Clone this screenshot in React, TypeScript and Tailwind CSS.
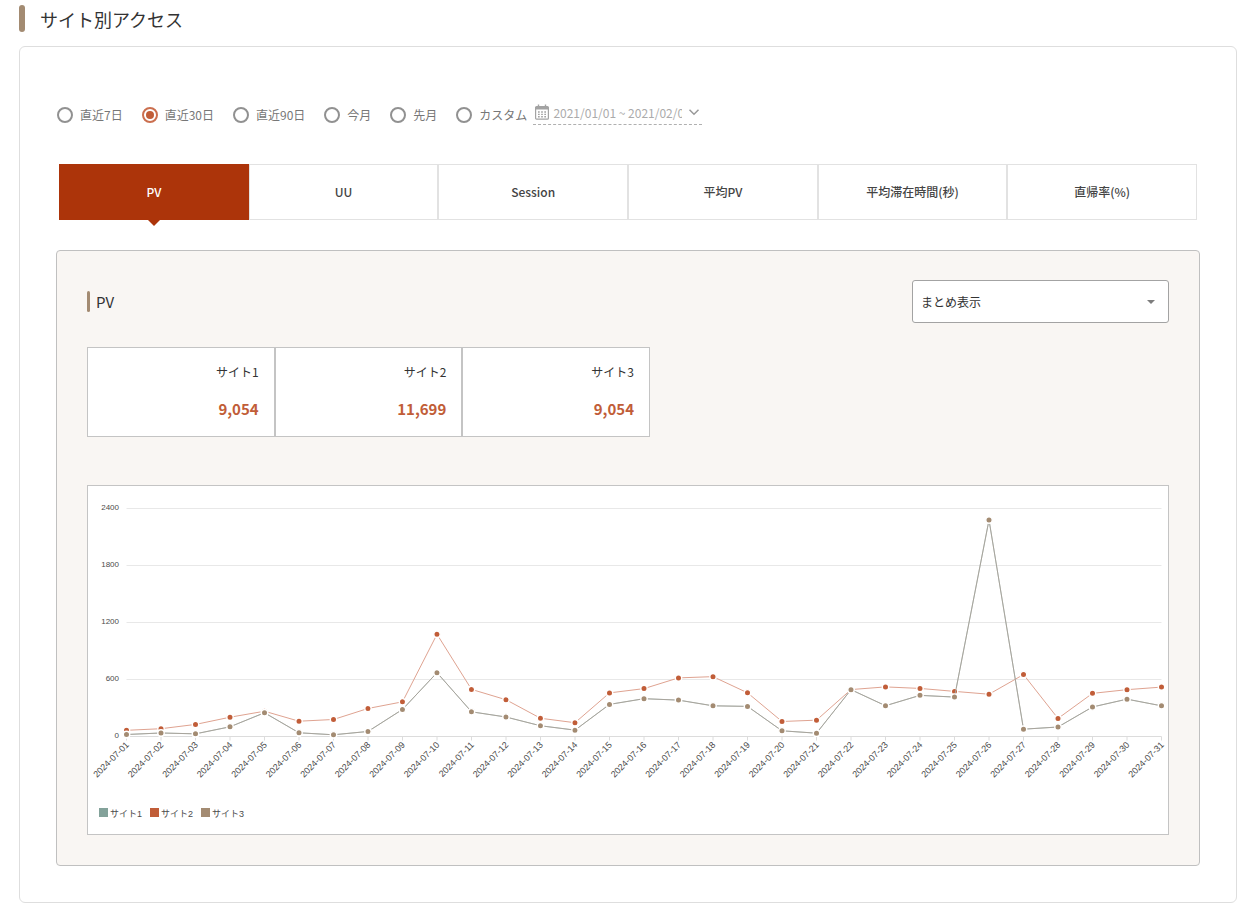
import { useState } from "react";

type Site = {
  name: string;
  total: number;
  line: string;
  dot: string;
  values: number[];
};

const site1Values = [
  21, 37, 28, 102, 250, 39, 18, 53, 285, 672, 260, 205, 113, 67, 338, 398, 383,
  323, 317, 60, 35, 493, 324, 433, 415, 2279, 77, 100, 311, 393, 323,
];

const site2Values = [
  65, 82, 127, 203, 266, 161, 179, 295, 365, 1076, 496, 387, 192, 145, 459, 504,
  617, 630, 460, 158, 172, 494, 522, 506, 475, 445, 652, 190, 454, 493, 520,
];

const sites: Site[] = [
  { name: "サイト1", total: 9054, line: "#c3cfcb", dot: "#83a29a", values: site1Values },
  { name: "サイト2", total: 11699, line: "#dfa391", dot: "#c15d38", values: site2Values },
  { name: "サイト3", total: 9054, line: "#a8a49c", dot: "#a38b72", values: site1Values },
];

const periods = ["直近7日", "直近30日", "直近90日", "今月", "先月", "カスタム"];

const tabs = ["PV", "UU", "Session", "平均PV", "平均滞在時間(秒)", "直帰率(%)"];

const ticks = [0, 600, 1200, 1800, 2400];

const LEFT = 38.5;
const RIGHT = 1073.5;
const TOP = 22.5;
const BOTTOM = 250.5;

const xAt = (i: number) => LEFT + (i * (RIGHT - LEFT)) / 30;
const yAt = (v: number) => BOTTOM - (v * (BOTTOM - TOP)) / 2400;

function CalendarIcon() {
  return (
    <svg width="14" height="16" viewBox="0 0 14 16" className="shrink-0" fill="none" stroke="#a3a3a3">
      <rect x="0.6" y="2.6" width="12.8" height="12.6" rx="1" strokeWidth="1.2" />
      <path d="M0.6 4.2H13.4" strokeWidth="2.6" />
      <path d="M3.5 0.4V3M10.5 0.4V3" strokeWidth="1.4" />
      <path d="M3 8H11M3 10.4H11M3 12.8H11" strokeWidth="1.4" strokeDasharray="1.7 1.45" />
    </svg>
  );
}

function LineChart() {
  return (
    <svg viewBox="0 0 1080 348" className="block w-full" role="img" aria-label="PV">
      {ticks.map((tick) => (
        <g key={tick}>
          <line x1={LEFT} x2={RIGHT} y1={yAt(tick)} y2={yAt(tick)} stroke={tick === 0 ? "#dcdcdc" : "#e8e8e8"} />
          <text x="31" y={yAt(tick) + 1} textAnchor="end" fontSize="8" fill="#4b4b4b">
            {tick}
          </text>
        </g>
      ))}

      {/* Dates */}
      {site1Values.map((_, i) => (
        <g key={i}>
          <line x1={xAt(i)} x2={xAt(i)} y1={BOTTOM} y2={BOTTOM + 4} stroke="#dcdcdc" />
          <text
            transform={`translate(${xAt(i) + 3} ${BOTTOM + 9}) rotate(-45)`}
            textAnchor="end"
            fontSize="9"
            fill="#4b4b4b"
          >
            {`2024-07-${String(i + 1).padStart(2, "0")}`}
          </text>
        </g>
      ))}

      {/* Series */}
      {sites.map((site) => (
        <g key={site.name}>
          <polyline
            points={site.values.map((v, i) => `${xAt(i)},${yAt(v)}`).join(" ")}
            fill="none"
            stroke={site.line}
          />
          {site.values.map((v, i) => (
            <circle key={i} cx={xAt(i)} cy={yAt(v)} r="3.2" fill={site.dot} stroke="#fff" strokeWidth="1.4" />
          ))}
        </g>
      ))}

      {/* Legend */}
      {sites.map((site, i) => (
        <g key={site.name}>
          <rect x={11 + i * 51} y="322" width="9" height="9" fill={site.dot} />
          <text x={22 + i * 51} y="331" fontSize="9" fill="#4b4b4b">
            {site.name}
          </text>
        </g>
      ))}
    </svg>
  );
}

export default function App() {
  const [period, setPeriod] = useState("直近30日");
  const [active, setActive] = useState("PV");

  return (
    <main className="bg-white pt-[5px] pr-4 pb-[6px] pl-[19px] font-['Noto_Sans_CJK_JP',sans-serif] text-xs text-[#333]">
      <div className="flex items-center gap-[15px]">
        <span className="h-[27px] w-[6px] rounded-full bg-[#a38b72]" />
        <h1 className="pt-px text-lg leading-[26px]">サイト別アクセス</h1>
      </div>

      <section className="mt-[14px] rounded-md border border-[#dedede] px-9 pt-14 pb-9">
        {/* Period */}
        <div className="flex items-end pl-px">
          <fieldset className="flex gap-[19px]">
            {periods.map((item) => (
              <label key={item} className="flex h-5 items-center gap-[7px] text-[#777]">
                <input
                  type="radio"
                  name="period"
                  checked={period === item}
                  onChange={() => setPeriod(item)}
                  className="grid size-4 appearance-none place-items-center rounded-full border-2 border-[#919191] checked:border-[#cb6f4f] checked:before:size-2 checked:before:rounded-full checked:before:bg-[#c15d38]"
                />
                {item}
              </label>
            ))}
          </fieldset>
          <div className="ml-[6px] flex h-[22px] w-[169px] items-center border-b border-dashed border-[#b0b0b0] pr-[2px] pb-[3px] pl-[2px]">
            <CalendarIcon />
            <input
              type="text"
              readOnly
              aria-label="期間"
              value="2021/01/01 ~ 2021/02/01"
              className="ml-1 h-[18px] w-[129px] min-w-0 text-[#ababab] outline-none"
            />
            <svg width="12" height="8" viewBox="0 0 12 8" className="ml-auto shrink-0" fill="none" stroke="#999">
              <path d="M1.5 1.8L6 6.2L10.5 1.8" strokeWidth="1.5" />
            </svg>
          </div>
        </div>

        {/* Tabs */}
        <div className="mx-[3px] mt-[39px] grid grid-cols-6">
          {tabs.map((tab) => (
            <button
              key={tab}
              type="button"
              onClick={() => setActive(tab)}
              className={
                active === tab
                  ? "relative h-14 border border-[#ac340a] bg-[#ac340a] font-medium text-white"
                  : "h-14 border border-[#e2e2e2] bg-white font-medium text-[#444]"
              }
            >
              {tab}
              {active === tab && (
                <span className="absolute top-full left-1/2 -translate-x-1/2 border-x-[7px] border-t-[7px] border-x-transparent border-t-[#ac340a]" />
              )}
            </button>
          ))}
        </div>

        <div className="mt-[30px] rounded border border-[#c0c0c0] bg-[#f9f6f3] px-[30px] pt-[29px] pb-[30px]">
          <div className="flex items-center justify-between">
            <div className="flex items-center gap-[6px]">
              <span className="h-[21px] w-[3px] rounded-xs bg-[#a38b72]" />
              <h2 className="text-[15px] leading-5">PV</h2>
            </div>
            <div className="relative">
              <select
                aria-label="表示"
                className="h-[43px] w-[257px] appearance-none rounded-[3px] border border-[#a3a3a3] bg-white px-2 text-[#333]"
              >
                <option>まとめ表示</option>
              </select>
              <svg width="8" height="4" viewBox="0 0 8 4" className="pointer-events-none absolute top-5 right-[14px]">
                <path d="M0 0H8L4 4Z" fill="#7d7d7d" />
              </svg>
            </div>
          </div>

          {/* Totals */}
          <div className="mt-6 grid w-[563px] max-w-full grid-cols-3">
            {sites.map((site) => (
              <div
                key={site.name}
                className="flex h-[90px] flex-col gap-[17px] border border-[#c4c4c4] bg-white px-[15px] pt-[14px] text-right"
              >
                <p className="leading-5">{site.name}</p>
                <p className="text-[15px] leading-5 font-bold text-[#c15d38]">{site.total.toLocaleString("en-US")}</p>
              </div>
            ))}
          </div>

          <div className="mt-12 border border-[#c4c4c4] bg-white font-['Liberation_Sans','Noto_Sans_CJK_JP',sans-serif]">
            <LineChart />
          </div>
        </div>
      </section>
    </main>
  );
}
